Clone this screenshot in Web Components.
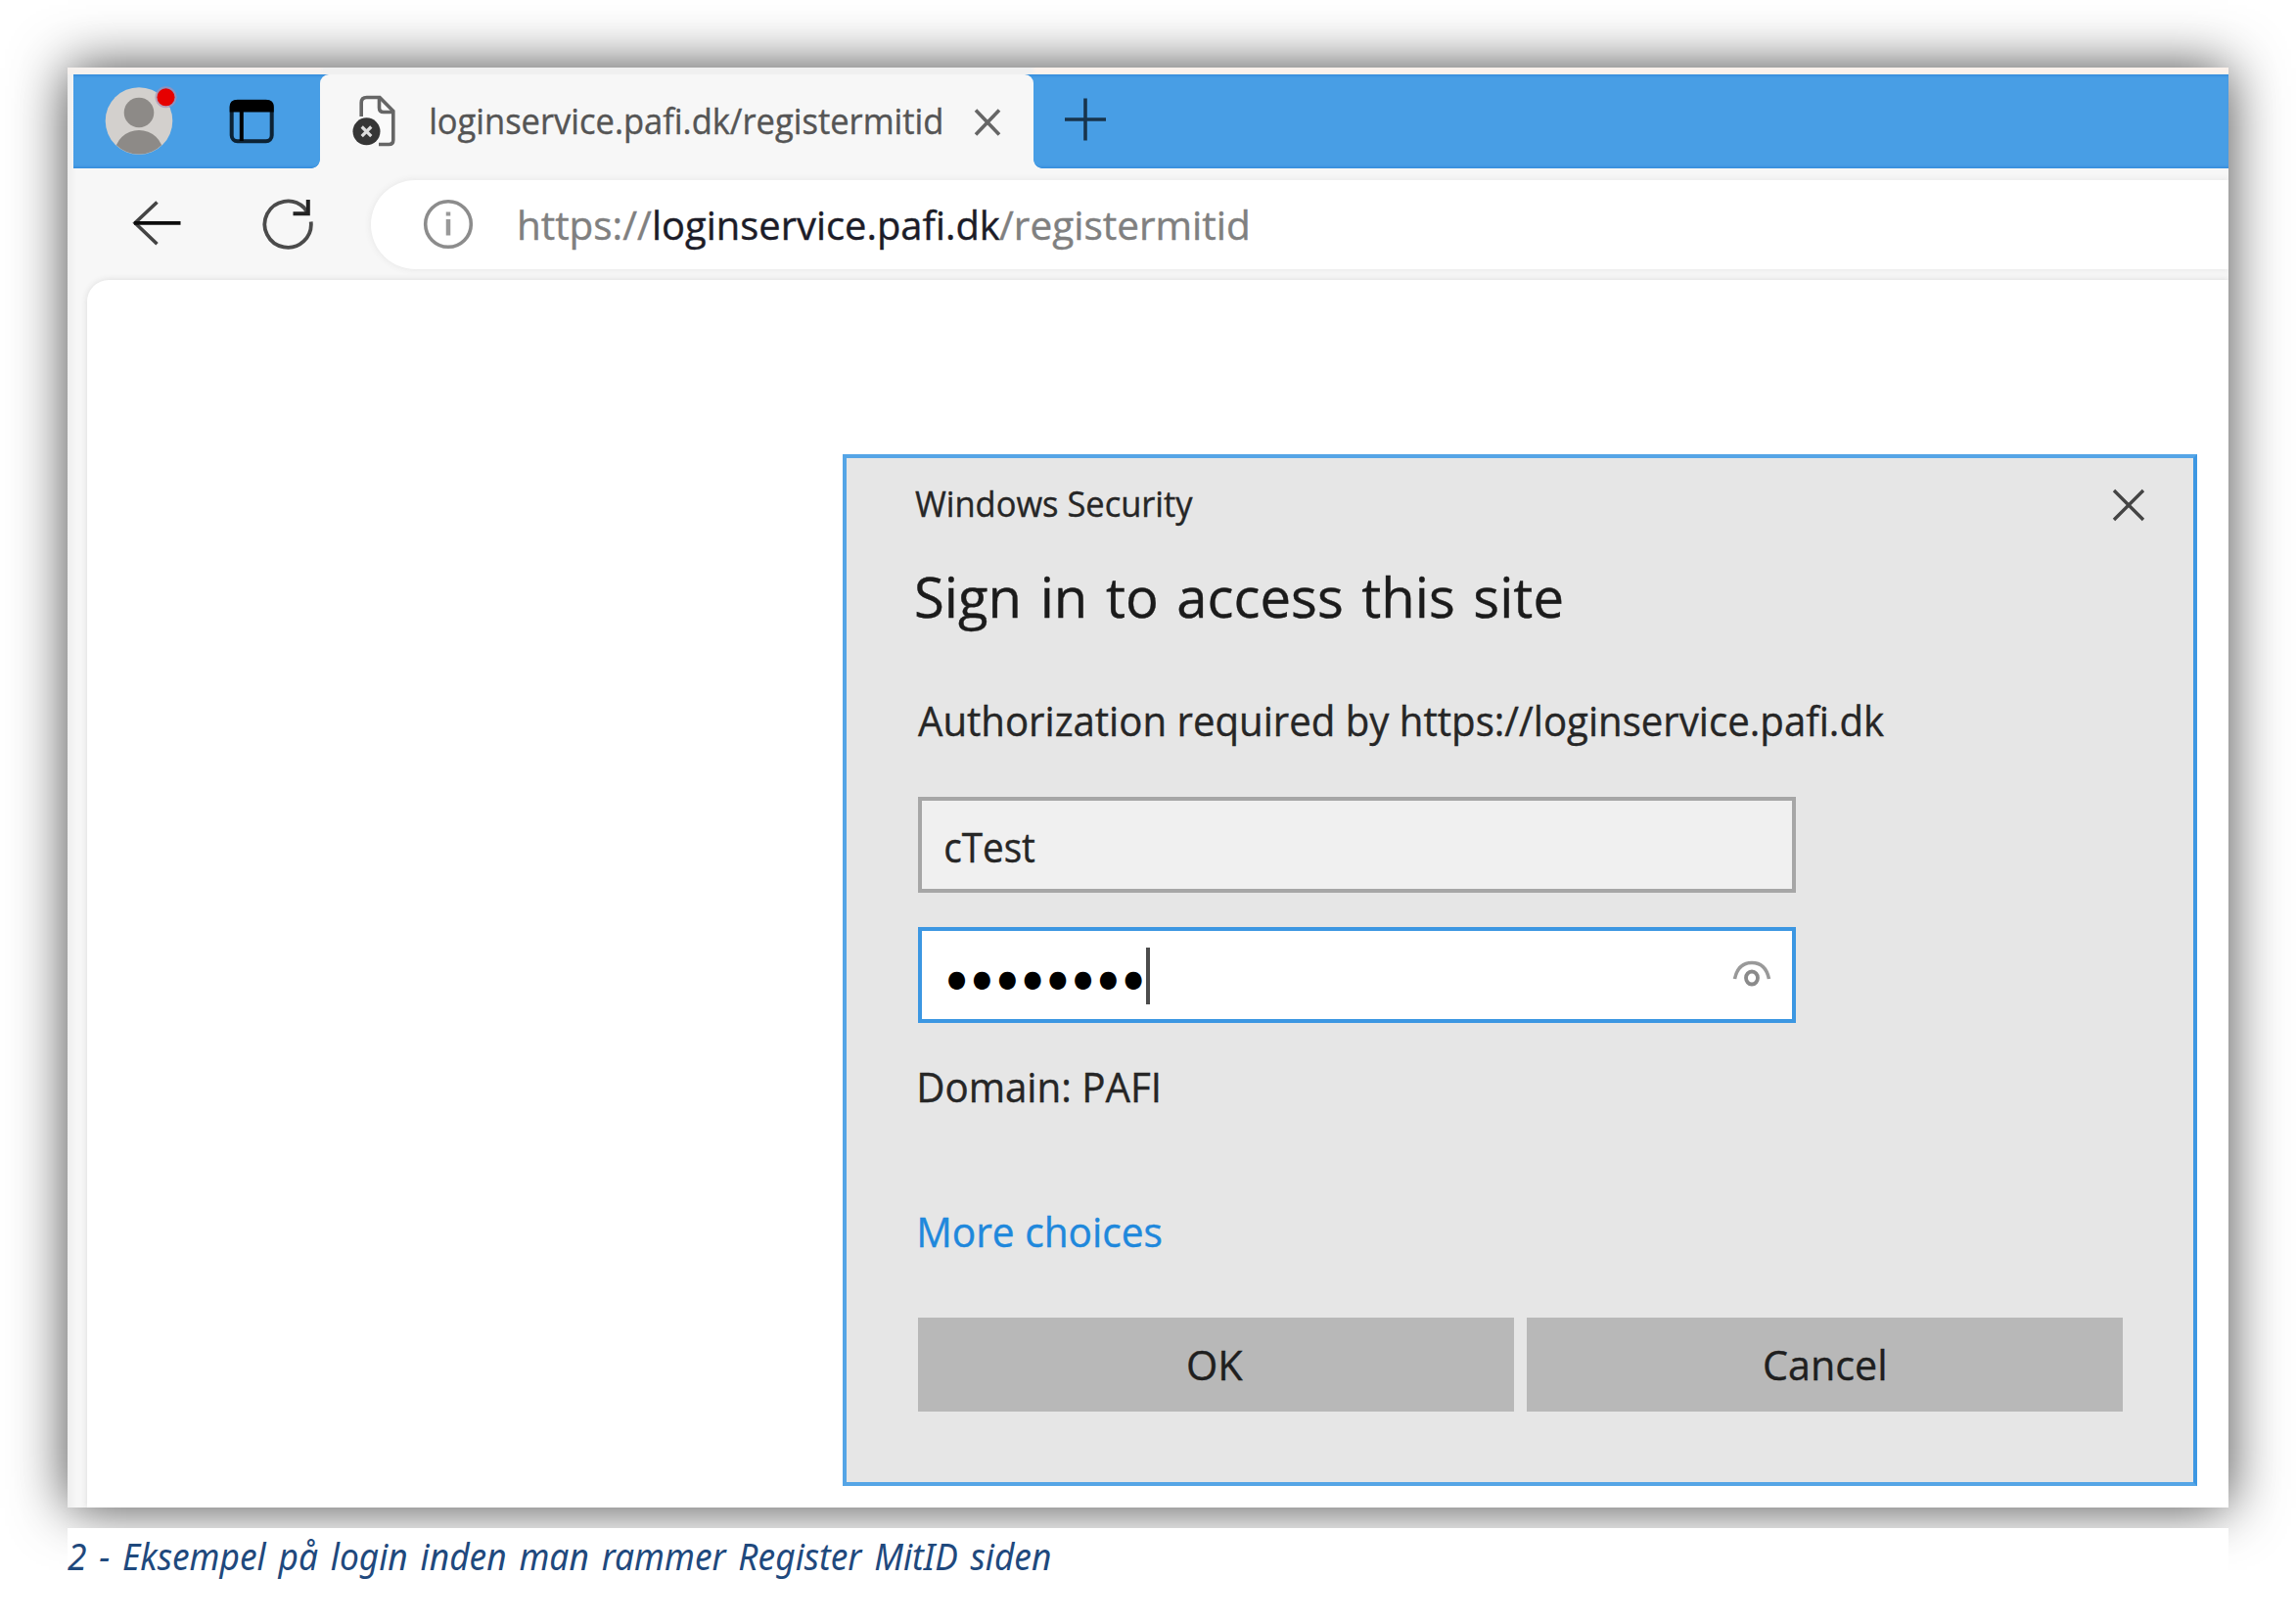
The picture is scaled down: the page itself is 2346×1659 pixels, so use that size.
<!DOCTYPE html>
<html lang="da">
<head>
<meta charset="utf-8">
<title>Login</title>
<style>
html,body{margin:0;padding:0;background:#fff}
body{width:2346px;height:1659px;overflow:hidden;font-family:"Open Sans","Noto Sans",sans-serif}
</style>
</head>
<body>
<doc-figure>
  <browser-window>
    <tab-strip slot="tabs"></tab-strip>
    <address-row slot="toolbar"></address-row>
    <signin-dialog></signin-dialog>
  </browser-window>
  <span slot="caption">2 - Eksempel på login inden man rammer Register MitID siden</span>
</doc-figure>
<script>
const define = (name, html) => customElements.define(name, class extends HTMLElement {
  connectedCallback() {
    if (!this.shadowRoot) this.attachShadow({mode: "open"}).innerHTML = html;
  }
});

/* One line of text whose visible ink fills the width given in the "ink" attribute. */
customElements.define("fit-text", class extends HTMLElement {
  connectedCallback() {
    if (this.shadowRoot) return;
    const root = this.attachShadow({mode: "open"});
    root.innerHTML = `<style>
      :host{display:block;flex:none;line-height:1;height:1em;white-space:nowrap}
      span{display:inline-block;vertical-align:top;line-height:1;transform-origin:0 0}
    </style><span><slot></slot></span>`;
    const cs = getComputedStyle(this);
    const c = document.createElement("canvas").getContext("2d");
    c.font = `${cs.fontStyle} ${cs.fontWeight} ${cs.fontSize} ${cs.fontFamily}`;
    if (cs.letterSpacing !== "normal") c.letterSpacing = cs.letterSpacing;
    c.wordSpacing = cs.wordSpacing;
    const m = c.measureText(this.textContent.trim());
    const ink = parseFloat(this.getAttribute("ink"));
    const s = ink / (m.actualBoundingBoxRight + m.actualBoundingBoxLeft);
    this.style.width = ink + "px";
    root.querySelector("span").style.transform =
      `translateX(${m.actualBoundingBoxLeft * s}px) scaleX(${s})`;
  }
});

customElements.define("doc-figure", class extends HTMLElement {
  connectedCallback() {
    const cap = this.querySelector("[slot=caption]").textContent;
    this.attachShadow({mode: "open"}).innerHTML = `<style>
      :host{display:flex;flex-direction:column;box-sizing:border-box;width:2346px;height:1659px;padding:69px 69px 0}
      .shot{width:2208px;height:1471px;box-shadow:0 0 53px rgba(0,0,0,.72)}
      .cap{position:relative;margin-top:21px;width:2208px;height:98px;box-sizing:border-box;background:#fff;padding-top:8px;
        color:#1f497d;font:italic 39px "Noto Sans","Open Sans",sans-serif;word-spacing:4px}
    </style>
    <div class="shot"><slot></slot></div>
    <div class="cap"><fit-text ink="1004">${cap}</fit-text></div>`;
  }
});

define("browser-window", `<style>
  :host{display:flex;flex-direction:column;width:2208px;height:1471px;background:linear-gradient(90deg,#eee,#f7f7f7 9px);overflow:hidden}
  .edge{flex:none;height:7px;background:linear-gradient(90deg,#f6f1ee 0 258px,#f0f0f0 262px 984px,#fbf2ec 990px)}
  .side{flex:1;display:flex;padding-left:20px}
  .page{flex:1;background:#fff;border-top-left-radius:22px;padding:178px 0 0 771.5px;box-shadow:0 0 6px #dadada}
</style>
<div class="edge"></div>
<slot name="tabs"></slot>
<slot name="toolbar"></slot>
<div class="side"><div class="page"><slot></slot></div></div>`);

define("tab-strip", `<style>
  :host{display:flex;flex:none;height:96px;margin-left:6px;background:#489ee5;box-shadow:inset 0 3px 2px -1px #3990de,inset 0 -3px 2px -1px #3990de}
  .left{display:flex;align-items:center;width:252px;flex:none}
  .avatar{margin-left:27px}
  .layout{margin:0 0 0 51px}
  .tab{position:relative;display:flex;width:729px;flex:none;background:#f7f7f7;border-radius:9px 9px 0 0;color:#555;font-size:36px}
  .tab:before,.tab:after{content:"";position:absolute;bottom:0;width:9px;height:9px}
  .tab:before{left:-9px;background:radial-gradient(circle at 0 0,#0000 8.5px,#f7f7f7 9.2px)}
  .tab:after{right:-9px;background:radial-gradient(circle at 100% 0,#0000 8.5px,#f7f7f7 9.2px)}
  .doc{margin:20px 0 0 31px}
  .tab fit-text{margin:29.5px 0 0 35px;-webkit-text-stroke:.4px}
  .x{margin:34px 0 0 32px}
  .plus{margin:22px 0 0 28.5px}
  svg{display:block;flex:none}
</style>
<div class="left">
  <svg class="avatar" width="80" height="84" viewBox="102 82 80 84">
    <clipPath id="c"><circle cx="142" cy="123.5" r="34"/></clipPath>
    <circle cx="142" cy="123.5" r="34.3" fill="#d3d0cd"/>
    <circle cx="142" cy="115" r="15.3" fill="#8d8a87"/>
    <ellipse cx="142" cy="156" rx="24.5" ry="23" fill="#8d8a87" clip-path="url(#c)"/>
    <circle cx="169.5" cy="99.3" r="11" fill="#a98fb0" opacity=".7"/>
    <circle cx="169.5" cy="99.3" r="9" fill="#e60000"/>
  </svg>
  <svg class="layout" width="48" height="48" viewBox="233.5 100 48 48">
    <rect x="237.2" y="103.7" width="41" height="40.6" rx="6" fill="none" stroke="#0c2234" stroke-width="4"/>
    <path d="M235.2 114.500V109q0-7 7-7h31q7 0 7 7v5.500z" fill="#000"/>
    <path d="M247.300 113v31" stroke="#000" stroke-width="4"/>
  </svg>
</div>
<div class="tab">
  <svg class="doc" width="48" height="56" viewBox="358 96 48 56">
    <path d="M369.200 119v-14q0-5.500 5.500-5.500H388l13.800 14V143q0 4.500-4.500 4.500H387" fill="#fafafa" stroke="#666" stroke-width="3.600"/>
    <path d="M387.500 100v10q0 4.500 4.500 4.500h10" fill="none" stroke="#666" stroke-width="3.600"/>
    <circle cx="374.500" cy="134.300" r="14" fill="#363636"/>
    <path d="M369.700 129.500l9.600 9.600m0-9.600l-9.600 9.600" stroke="#ddd" stroke-width="3.200"/>
  </svg>
  <fit-text ink="520.5">loginservice.pafi.dk/registermitid</fit-text>
  <svg class="x" width="30" height="30" viewBox="-15 -15 30 30"><path d="M-12-12.500L12 12.500M12-12.500L-12 12.500" stroke="#666" stroke-width="3.600"/></svg>
</div>
<svg class="plus" width="48" height="48" viewBox="-24 -24 48 48"><path d="M-21 0H21M0-21.500V21.500" stroke="#18344c" stroke-width="3.600"/></svg>`);

define("address-row", `<style>
  :host{display:flex;flex:none;height:114px;color:#808080;font-size:40.500px}
  svg{display:block;flex:none}
  .back{margin:30px 0 0 64px}
  .reload{margin:27px 0 0 76px}
  .bar{display:flex;flex:1;height:91px;margin:12px 0 0 56px;background:#fff;border-radius:45.500px 0 0 45.500px;box-shadow:0 0 7px #e4e4e4}
  .info{margin:17px 0 0 50.500px}
  fit-text{margin-top:25.500px;-webkit-text-stroke:.4px}
  .a{margin-left:45px}.b{margin-left:3.500px;color:#1c1c28}.c{margin-left:-1px}
</style>
<svg class="back" width="56" height="52" viewBox="133 202 56 52"><path d="M160.500 206.500L138 227.800l22.500 21.400" fill="none" stroke="#444" stroke-width="3.600"/><path d="M184.500 227.800H137" stroke="#0c0c0c" stroke-width="3.800"/></svg>
<svg class="reload" width="58" height="60" viewBox="265 199 58 60"><path d="M317.700 226.500A23.700 23.700 0 1 1 310.500 212L314 217" fill="none" stroke="#4b4b4b" stroke-width="3.800"/><path d="M314.800 204v14.200H299.500" fill="none" stroke="#222" stroke-width="4"/></svg>
<div class="bar">
  <svg class="info" width="56" height="56" viewBox="-28 -28 56 56"><circle r="23.300" fill="none" stroke="#8c8c8c" stroke-width="3.600"/><path d="M0-5V11.500M0-12.500v4" stroke="#999" stroke-width="4.500"/></svg>
  <fit-text class="a" ink="135">https://</fit-text>
  <fit-text class="b" ink="352.500">loginservice.pafi.dk</fit-text>
  <fit-text class="c" ink="254">/registermitid</fit-text>
</div>`);

define("text-field", `<style>
  :host{display:flex;box-sizing:border-box;width:897.500px;height:98px;border:4px solid #a6a6a6;background:#f0f0f0;padding:26px 23px 0 24.500px;font-size:42px}
  :host([focused]){border-color:#3c97e2;background:#fff}
</style><slot></slot>`);

define("dialog-button", `<style>
  :host{display:flex;flex:1;height:96px;align-items:center;justify-content:center;background:#b8b8b8;font-size:42px}
</style><slot></slot>`);

define("signin-dialog", `<style>
  :host{display:flex;flex-direction:column;box-sizing:border-box;width:1384.500px;height:1054px;background:#e6e6e6;
    border:4.500px solid #55a5e6;border-right-color:#3d97e2;padding:29px 72px 0 73px;color:#262626;font-size:42px;-webkit-text-stroke:.4px}
  header{display:flex;justify-content:space-between;height:36px;font-size:36px}
  header fit-text{margin-left:-2.500px}
  header svg{margin:2px -23px 0 0;flex:none}
  .title{font-size:57px;margin-top:47.500px;margin-left:-1.500px;color:#1b1b1b;word-spacing:4px}
  .auth{margin-top:77.500px;margin-left:.5px}
  .f1{margin-top:56.500px}.f2{margin-top:35px}
  .dots{font-family:"DejaVu Sans",sans-serif;font-size:24px;letter-spacing:7px;color:#000;margin-left:2.500px;margin-top:11.500px;-webkit-text-stroke:0}
  .caret{width:4px;height:58px;margin:-9px 0 0 4px;background:#4c4c4c;flex:none}
  .eye{margin:2px -2px 0 auto;flex:none}
  .domain{margin:44px 0 0 2.500px}
  .more{margin:106.500px 0 0 2.500px;color:#1f88dc}
  .buttons{display:flex;gap:13.500px;margin-top:66.500px}
  .buttons fit-text{color:#1f1f1f;margin-top:1px}
</style>
<header><fit-text ink="284.500">Windows Security</fit-text>
<svg width="34" height="34" viewBox="-17 -17 34 34"><path d="M-15-15L15 15M15-15L-15 15" stroke="#444" stroke-width="3.400"/></svg></header>
<fit-text class="title" ink="660">Sign in to access this site</fit-text>
<fit-text class="auth" ink="987">Authorization required by https://loginservice.pafi.dk</fit-text>
<text-field class="f1"><fit-text ink="91">cTest</fit-text></text-field>
<text-field class="f2" focused>
  <fit-text class="dots" ink="198">●●●●●●●●</fit-text><span class="caret"></span>
  <svg class="eye" width="40" height="32" viewBox="1770 977 40 32"><path d="M1772.500 998C1775 986 1782 981.500 1790 981.500S1805 986 1807.500 998" fill="none" stroke="#999" stroke-width="3.600"/><ellipse cx="1790" cy="997" rx="6" ry="6.500" fill="none" stroke="#8a8a8a" stroke-width="3.800"/></svg>
</text-field>
<fit-text class="domain" ink="243.500">Domain: PAFI</fit-text>
<fit-text class="more" ink="247">More choices</fit-text>
<div class="buttons"><dialog-button><fit-text ink="56">OK</fit-text></dialog-button><dialog-button><fit-text ink="123">Cancel</fit-text></dialog-button></div>`);
</script>
</body>
</html>
